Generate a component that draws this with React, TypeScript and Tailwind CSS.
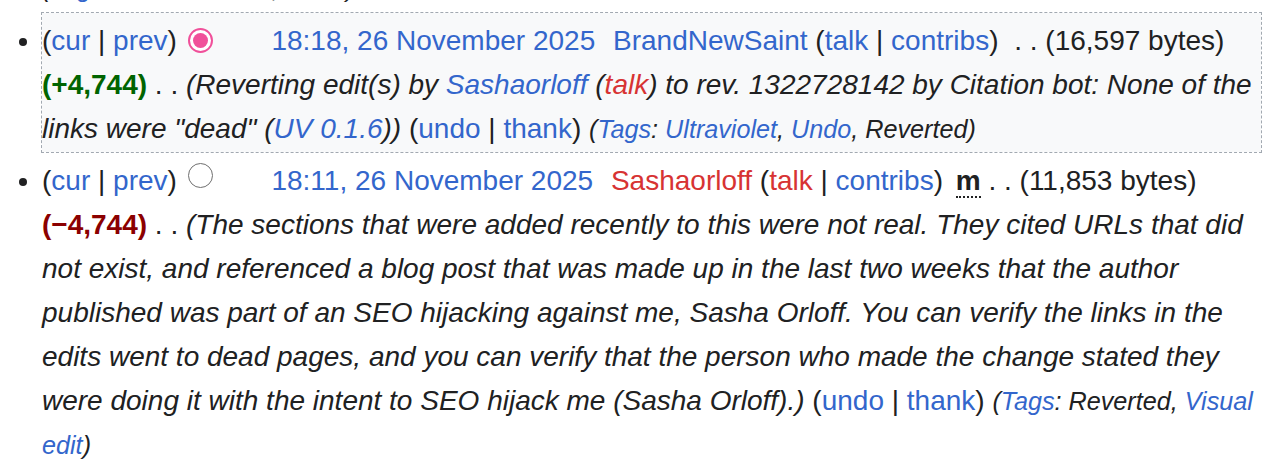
const link = "text-[#3366cc]"
const red = "text-[#d73333]"

function Radio({ checked }: { checked?: boolean }) {
  if (checked) {
    return (
      <span className="ml-[3px] inline-flex h-[25px] w-[25px] items-center justify-center rounded-full border-[2px] border-[#f0509a] bg-white align-[2px]">
        <span className="h-[15px] w-[15px] rounded-full bg-[#f0509a]" />
      </span>
    )
  }
  return <span className="ml-[3px] inline-block h-[25px] w-[25px] rounded-full border-[1.5px] border-[#6f6f6f] bg-white align-[2px]" />
}

function Tags({ children }: { children: React.ReactNode }) {
  return <span className="text-[90%] italic">{children}</span>
}

export default function App() {
  return (
    <div className="h-[472px] w-[1280px] overflow-hidden bg-white font-['Liberation_Sans',Arial,sans-serif] text-[28px] leading-[44px] text-[#202122]">
      <ul className="ml-[42px] w-[1219px] list-disc">
        {/* tail of the previous entry, clipped by the window */}
        <li className="mb-[3px] flex h-[10px] list-none flex-col justify-end overflow-hidden">
          <div className="shrink-0">
            <Tags>
              (<span className={link}>Tags</span>: Manual revert, <span className={link}>Undo</span>)
            </Tags>
          </div>
        </li>

        {/* selected revision */}
        <li className="mb-[7px] bg-[#f8f9fa] pt-[6px] pb-[1px] outline-1 outline-dashed outline-[#a2a9b1]">
          <span>
            (<span className={link}>cur</span> | <span className={link}>prev</span>)
          </span>{" "}
          <Radio checked />{" "}
          <span className={`ml-[51px] ${link}`}>18:18, 26 November 2025</span>{" "}
          <span className="ml-[10px]">
            <span className={link}>BrandNewSaint</span> (<span className={link}>talk</span> |{" "}
            <span className={link}>contribs</span>)
          </span>{" "}
          <span className="ml-[8px]">. . (16,597 bytes)</span>{" "}
          <span className="font-bold text-[#006400]">(+4,744)</span> . .{" "}
          <span className="italic">
            (Reverting edit(s) by <span className={link}>Sashaorloff</span> (<span className={red}>talk</span>) to rev.
            1322728142 by Citation bot: None of the links were "dead" (<span className={link}>UV 0.1.6</span>))
          </span>{" "}
          <span>
            (<span className={link}>undo</span> | <span className={link}>thank</span>)
          </span>{" "}
          <Tags>
            (<span className={link}>Tags</span>: <span className={link}>Ultraviolet</span>,{" "}
            <span className={link}>Undo</span>, Reverted)
          </Tags>
        </li>

        <li>
          <span>
            (<span className={link}>cur</span> | <span className={link}>prev</span>)
          </span>{" "}
          <Radio />{" "}
          <span className={`ml-[51px] ${link}`}>18:11, 26 November 2025</span>{" "}
          <span className="ml-[10px]">
            <span className={red}>Sashaorloff</span> (<span className={red}>talk</span> |{" "}
            <span className={link}>contribs</span>)
          </span>{" "}
          <abbr className="ml-[5px] border-b-[2px] border-dotted border-[#202122] font-bold leading-none no-underline">
            m
          </abbr>{" "}
          . . (11,853 bytes){" "}
          <span className="font-bold text-[#8b0000]">(−4,744)</span> . .{" "}
          <span className="italic">
            (The sections that were added recently to this were not real. They cited URLs that did not exist, and
            referenced a blog post that was made up in the last two weeks that the author published was part of an SEO
            hijacking against me, Sasha Orloff. You can verify the links in the edits went to dead pages, and you can
            verify that the person who made the change stated they were doing it with the intent to SEO hijack me (Sasha
            Orloff).)
          </span>{" "}
          <span>
            (<span className={link}>undo</span> | <span className={link}>thank</span>)
          </span>{" "}
          <Tags>
            (<span className={link}>Tags</span>: Reverted, <span className={link}>Visual edit</span>)
          </Tags>
        </li>
      </ul>
    </div>
  )
}
